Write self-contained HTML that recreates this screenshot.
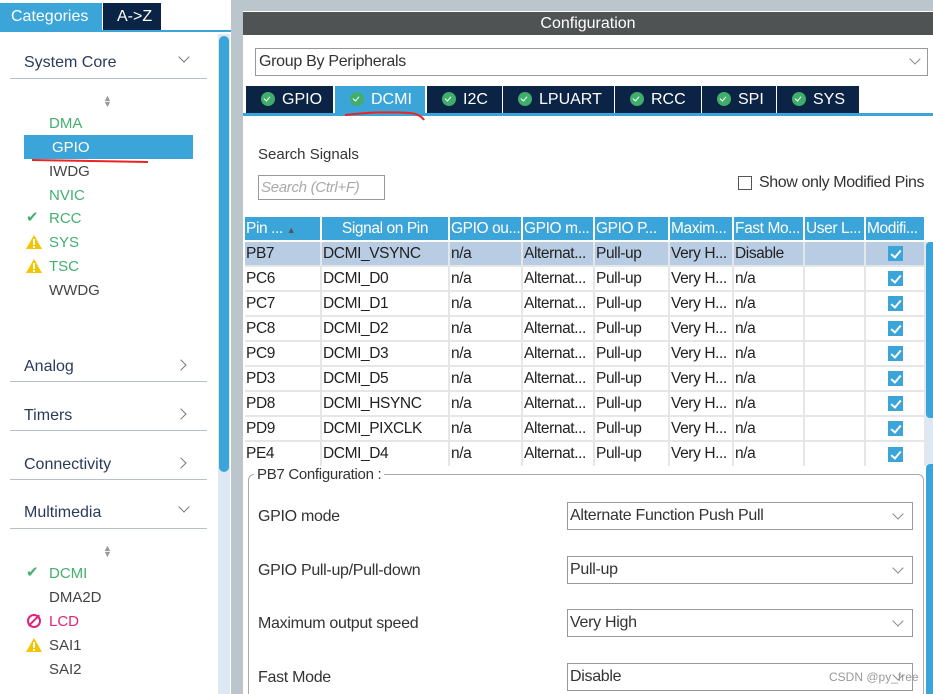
<!DOCTYPE html>
<html style="overflow:hidden;width:933px;height:694px"><head><meta charset="utf-8"><style>
*{box-sizing:border-box;margin:0;padding:0}
body{width:933px;height:694px;overflow:hidden;background:#fff;font-family:"Liberation Sans",sans-serif;position:relative;color:#333}
.a{position:absolute}
.cat{font-size:16px;color:#2a3a5c}
.line{height:1px;background:#b7c0c8}
.chev{position:absolute;width:8px;height:8px;border-right:1.3px solid #777;border-bottom:1.3px solid #777}
.it{position:absolute;font-size:15px;left:49px}
.g{color:#43b070}.d{color:#444}
.tab{position:absolute;top:86px;height:27px;background:#0b2345;color:#fff;font-size:16px;line-height:27px;border-right:1px solid #fff}
.tab i{display:inline-block;width:14px;height:14px;border-radius:50%;background:#3fae6a;vertical-align:-2px;margin:0 7px 0 15px;position:relative}
.tab i:after{content:"";position:absolute;left:4px;top:3px;width:3px;height:5px;border-right:1.5px solid #fff;border-bottom:1.5px solid #fff;transform:rotate(40deg)}
table{position:absolute;left:245px;top:217px;width:680px;border-collapse:collapse;font-size:15.5px;letter-spacing:-0.4px;table-layout:fixed}
td,th{height:25px;border-right:2px solid #e4e6e8;border-bottom:2px solid #e4e6e8;padding:0 1px;white-space:nowrap;overflow:hidden;text-align:left;font-weight:normal;color:#222}
th{background:#3ba5d9;color:#fff;border-color:#fff;height:24px}
tr.s td{background:#b8cde4}
.cb{display:block;margin:0 auto;width:15px;height:15px;background:#3ba5d9;position:relative}
.cb:after{content:"";position:absolute;left:5px;top:2px;width:4px;height:8px;border-right:2px solid #fff;border-bottom:2px solid #fff;transform:rotate(40deg)}
.lbl{position:absolute;left:258px;font-size:16px;letter-spacing:-0.3px;color:#333}
.sel{position:absolute;left:567px;width:346px;height:28px;border:1px solid #999;font-size:16px;letter-spacing:-0.3px;line-height:26px;padding-left:2px;color:#333}
.sel .chev{right:10px;top:7px;transform:rotate(45deg);border-color:#888}
</style></head><body>
<div class="a" style="left:0;top:3px;width:102px;height:27px;background:#3ba5d9;color:#fff;font-size:16px;line-height:27px;padding-left:11px">Categories</div>
<div class="a" style="left:103px;top:3px;width:58px;height:27px;background:#0b2345;color:#fff;font-size:16px;line-height:27px;padding-left:14px">A-&gt;Z</div>
<div class="a" style="left:0;top:30px;width:231px;height:2px;background:#3ba5d9"></div>
<div class="a" style="left:218px;top:34px;width:12px;height:660px;background:#dce9f5"></div>
<div class="a" style="left:219px;top:36px;width:10px;height:436px;background:#3ba5d9;border-radius:5px"></div>
<div class="a" style="left:231px;top:0;width:12px;height:694px;background:#bac5cc"></div>

<div class="a cat" style="left:24px;top:54px">System Core</div>
<div class="chev" style="left:180px;top:53px;transform:rotate(45deg)"></div>
<div class="a line" style="left:10px;top:78px;width:197px"></div>
<div class="a" style="left:103px;top:95px;color:#999;font-size:9px;line-height:6px">▲<br>▼</div>
<div class="it g" style="top:115px">DMA</div>
<div class="a" style="left:24px;top:135px;width:169px;height:24px;background:#3ba5d9"></div>
<div class="it" style="top:139px;left:52px;color:#fff">GPIO</div>
<div class="a" style="left:32px;top:160px;width:116px;height:2px;background:#e22;transform:rotate(1deg)"></div>
<div class="it d" style="top:163px">IWDG</div>
<div class="it g" style="top:187px">NVIC</div>
<div class="a g" style="left:26px;top:208px;font-size:15px">✔</div>
<div class="it g" style="top:210px">RCC</div>
<svg class="a" style="left:25px;top:234px" width="18" height="16"><path d="M9 1 L17 15 L1 15Z" fill="#f5c400"/><rect x="8" y="5" width="2" height="6" fill="#fff"/><rect x="8" y="12" width="2" height="2" fill="#fff"/></svg>
<div class="it g" style="top:234px">SYS</div>
<svg class="a" style="left:25px;top:258px" width="18" height="16"><path d="M9 1 L17 15 L1 15Z" fill="#f5c400"/><rect x="8" y="5" width="2" height="6" fill="#fff"/><rect x="8" y="12" width="2" height="2" fill="#fff"/></svg>
<div class="it g" style="top:258px">TSC</div>
<div class="it d" style="top:282px">WWDG</div>

<div class="a cat" style="left:24px;top:358px">Analog</div>
<div class="chev" style="left:177px;top:361px;transform:rotate(-45deg)"></div>
<div class="a line" style="left:10px;top:381px;width:197px"></div>
<div class="a cat" style="left:24px;top:407px">Timers</div>
<div class="chev" style="left:177px;top:410px;transform:rotate(-45deg)"></div>
<div class="a line" style="left:10px;top:430px;width:197px"></div>
<div class="a cat" style="left:24px;top:456px">Connectivity</div>
<div class="chev" style="left:177px;top:459px;transform:rotate(-45deg)"></div>
<div class="a line" style="left:10px;top:479px;width:197px"></div>
<div class="a cat" style="left:24px;top:504px">Multimedia</div>
<div class="chev" style="left:180px;top:503px;transform:rotate(45deg)"></div>
<div class="a line" style="left:10px;top:528px;width:197px"></div>
<div class="a" style="left:103px;top:545px;color:#999;font-size:9px;line-height:6px">▲<br>▼</div>
<div class="a g" style="left:26px;top:563px;font-size:15px">✔</div>
<div class="it g" style="top:565px">DCMI</div>
<div class="it d" style="top:589px">DMA2D</div>
<div class="a" style="left:27px;top:614px;width:14px;height:14px;border:2px solid #e0247a;border-radius:50%"></div>
<div class="a" style="left:33px;top:613px;width:2px;height:15px;background:#e0247a;transform:rotate(45deg)"></div>
<div class="it" style="top:613px;color:#e0247a">LCD</div>
<svg class="a" style="left:25px;top:637px" width="18" height="16"><path d="M9 1 L17 15 L1 15Z" fill="#f5c400"/><rect x="8" y="5" width="2" height="6" fill="#fff"/><rect x="8" y="12" width="2" height="2" fill="#fff"/></svg>
<div class="it d" style="top:637px">SAI1</div>
<div class="it d" style="top:661px">SAI2</div>

<div class="a" style="left:243px;top:0;width:690px;height:11px;background:#bac5cc"></div>
<div class="a" style="left:243px;top:12px;width:690px;height:23px;background:#505354;color:#fff;font-size:16px;text-align:center;line-height:23px">Configuration</div>
<div class="a" style="left:255px;top:48px;width:673px;height:28px;border:1px solid #999;font-size:16px;letter-spacing:-0.3px;line-height:26px;padding-left:3px;color:#333">Group By Peripherals<div class="chev" style="right:8px;top:6px;transform:rotate(45deg);border-color:#888"></div></div>
<div class="tab" style="left:246px;width:88px"><i></i>GPIO</div>
<div class="tab" style="left:335px;width:91px;background:#3ba5d9"><i></i>DCMI</div>
<div class="tab" style="left:427px;width:76px"><i></i>I2C</div>
<div class="tab" style="left:503px;width:112px"><i></i>LPUART</div>
<div class="tab" style="left:615px;width:87px"><i></i>RCC</div>
<div class="tab" style="left:702px;width:75px"><i></i>SPI</div>
<div class="tab" style="left:777px;width:83px"><i></i>SYS</div>
<div class="a" style="left:243px;top:113px;width:690px;height:3px;background:#3ba5d9"></div>
<svg class="a" style="left:340px;top:110px" width="90" height="12"><path d="M5 5 Q40 1 70 3 Q80 4 84 10" stroke="#e22" stroke-width="2" fill="none"/></svg>

<div class="a" style="left:258px;top:146px;font-size:15px;color:#333">Search Signals</div>
<div class="a" style="left:258px;top:175px;width:127px;height:25px;border:1px solid #999;font-size:15px;letter-spacing:-0.3px;font-style:italic;color:#aaa;line-height:23px;padding-left:2px">Search (Ctrl+F)</div>
<div class="a" style="left:738px;top:176px;width:14px;height:14px;border:1px solid #555"></div>
<div class="a" style="left:759px;top:174px;font-size:16px;letter-spacing:-0.4px;white-space:nowrap;color:#333">Show only Modified Pins</div>

<table>
<colgroup><col style="width:76px"><col style="width:128px"><col style="width:73px"><col style="width:72px"><col style="width:75px"><col style="width:64px"><col style="width:71px"><col style="width:61px"><col style="width:60px"></colgroup>
<tr><th>Pin ... <span style="color:#555;font-size:9px">▲</span></th><th style="text-align:center">Signal on Pin</th><th>GPIO ou...</th><th>GPIO m...</th><th>GPIO P...</th><th>Maxim...</th><th>Fast Mo...</th><th>User L...</th><th>Modifi...</th></tr>
<tr class="s"><td>PB7</td><td>DCMI_VSYNC</td><td>n/a</td><td>Alternat...</td><td>Pull-up</td><td>Very H...</td><td>Disable</td><td></td><td><span class="cb"></span></td></tr>
<tr><td>PC6</td><td>DCMI_D0</td><td>n/a</td><td>Alternat...</td><td>Pull-up</td><td>Very H...</td><td>n/a</td><td></td><td><span class="cb"></span></td></tr>
<tr><td>PC7</td><td>DCMI_D1</td><td>n/a</td><td>Alternat...</td><td>Pull-up</td><td>Very H...</td><td>n/a</td><td></td><td><span class="cb"></span></td></tr>
<tr><td>PC8</td><td>DCMI_D2</td><td>n/a</td><td>Alternat...</td><td>Pull-up</td><td>Very H...</td><td>n/a</td><td></td><td><span class="cb"></span></td></tr>
<tr><td>PC9</td><td>DCMI_D3</td><td>n/a</td><td>Alternat...</td><td>Pull-up</td><td>Very H...</td><td>n/a</td><td></td><td><span class="cb"></span></td></tr>
<tr><td>PD3</td><td>DCMI_D5</td><td>n/a</td><td>Alternat...</td><td>Pull-up</td><td>Very H...</td><td>n/a</td><td></td><td><span class="cb"></span></td></tr>
<tr><td>PD8</td><td>DCMI_HSYNC</td><td>n/a</td><td>Alternat...</td><td>Pull-up</td><td>Very H...</td><td>n/a</td><td></td><td><span class="cb"></span></td></tr>
<tr><td>PD9</td><td>DCMI_PIXCLK</td><td>n/a</td><td>Alternat...</td><td>Pull-up</td><td>Very H...</td><td>n/a</td><td></td><td><span class="cb"></span></td></tr>
<tr><td style="border-bottom:0">PE4</td><td style="border-bottom:0">DCMI_D4</td><td style="border-bottom:0">n/a</td><td style="border-bottom:0">Alternat...</td><td style="border-bottom:0">Pull-up</td><td style="border-bottom:0">Very H...</td><td style="border-bottom:0">n/a</td><td style="border-bottom:0"></td><td style="border-bottom:0"><span class="cb"></span></td></tr>
</table>
<div class="a" style="left:926px;top:242px;width:7px;height:222px;background:#dce9f5"></div>
<div class="a" style="left:926px;top:242px;width:7px;height:176px;background:#3ba5d9;border-radius:4px 0 0 4px"></div>
<div class="a" style="left:926px;top:464px;width:7px;height:230px;background:#3ba5d9;border-radius:4px 0 0 0"></div>

<div class="a" style="left:248px;top:474px;width:676px;height:240px;border:1px solid #aaa;border-radius:6px"></div>
<div class="a" style="left:254px;top:466px;background:#fff;padding:0 3px;font-size:15px;letter-spacing:-0.3px;color:#333">PB7 Configuration :</div>
<div class="lbl" style="top:508px">GPIO mode</div>
<div class="sel" style="top:502px">Alternate Function Push Pull<div class="chev"></div></div>
<div class="lbl" style="top:562px">GPIO Pull-up/Pull-down</div>
<div class="sel" style="top:556px">Pull-up<div class="chev"></div></div>
<div class="lbl" style="top:615px">Maximum output speed</div>
<div class="sel" style="top:609px">Very High<div class="chev"></div></div>
<div class="lbl" style="top:669px">Fast Mode</div>
<div class="sel" style="top:663px">Disable<div class="chev"></div></div>
<div class="a" style="left:829px;top:670px;font-size:12px;color:#999">CSDN @py_free</div>
</body></html>
